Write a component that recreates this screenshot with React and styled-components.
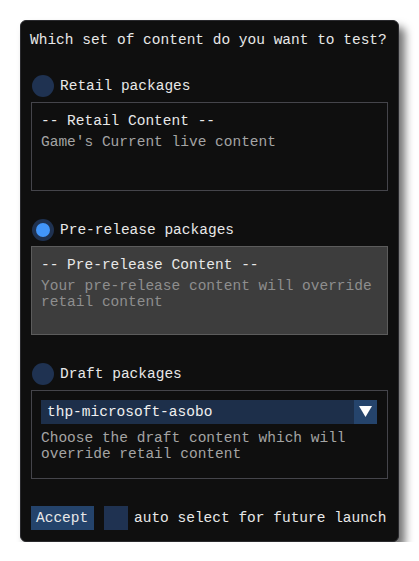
import React, { useState } from "react";
import styled, { createGlobalStyle } from "styled-components";

const GlobalStyle = createGlobalStyle`
  body {
    margin: 0;
    background: #ffffff;
    font-family: "Liberation Mono", "DejaVu Sans Mono", monospace;
  }
`;

const Page = styled.div`
  padding: 20px 0 0 20px;
`;

const Window = styled.div`
  width: 379px;
  box-sizing: border-box;
  padding: 10px 10px 11px 10px;
  background: #0f0f0f;
  border: 1px solid #2a2a2e;
  border-radius: 6px;
  box-shadow: 6px 7px 9px rgba(0, 0, 0, 0.55);
  color: #e8e8e8;
  font-size: 14.5px;
  display: flex;
  flex-direction: column;
`;

const Title = styled.div`
  line-height: 18px;
  white-space: pre;
  margin-left: -1px;
`;

const Section = styled.div`
  display: flex;
  flex-direction: column;
  gap: 5px;
  margin-top: ${({ $top }) => $top}px;
`;

const RadioRow = styled.label`
  display: flex;
  align-items: center;
  gap: 6px;
  height: 22px;
  margin-left: 1px;
  cursor: pointer;
  white-space: pre;
`;

const RadioCircle = styled.span`
  width: 22px;
  height: 22px;
  border-radius: 50%;
  background: #1f3251;
  display: flex;
  align-items: center;
  justify-content: center;
  &::after {
    content: "";
    display: ${({ $on }) => ($on ? "block" : "none")};
    width: 14px;
    height: 14px;
    border-radius: 50%;
    background: #4296fa;
  }
`;

const Panel = styled.div`
  height: 89px;
  box-sizing: border-box;
  padding: 10px 9px 0 9px;
  border: 1px solid ${({ $active }) => ($active ? "#5c5c5c" : "#45454b")};
  background: ${({ $active }) => ($active ? "#3d3d3d" : "transparent")};
  display: flex;
  flex-direction: column;
`;

const PanelTitle = styled.div`
  line-height: 16px;
  white-space: pre;
  margin-bottom: 5px;
`;

const Dim = styled.div`
  line-height: 16px;
  color: ${({ $active }) => ($active ? "#8e8e8e" : "#a4a4a4")};
  white-space: pre-wrap;
`;

const Combo = styled.div`
  display: flex;
  height: 24px;
  background: #1d2f4a;
  margin: -1px 1px 6px 0;
`;

const ComboText = styled.div`
  flex: 1;
  line-height: 24px;
  padding-left: 6px;
  color: #f0f0f0;
`;

const ComboArrow = styled.div`
  width: 23px;
  background: #25446c;
  display: flex;
  align-items: center;
  justify-content: center;
`;

const Footer = styled.div`
  display: flex;
  align-items: center;
  margin-top: 27px;
`;

const Button = styled.button`
  height: 24px;
  width: 63px;
  padding: 0 0 0 5px;
  text-align: left;
  border: none;
  background: #24436b;
  color: #e8e8e8;
  font: inherit;
`;

const Checkbox = styled.span`
  width: 24px;
  height: 24px;
  background: #1f3251;
  margin-left: 10px;
  margin-right: 6px;
`;

const FooterLabel = styled.span`
  white-space: pre;
`;

const options = [
  {
    key: "retail",
    label: "Retail packages",
    title: "-- Retail Content --",
    desc: "Game's Current live content",
  },
  {
    key: "pre",
    label: "Pre-release packages",
    title: "-- Pre-release Content --",
    desc: "Your pre-release content will override\nretail content",
  },
];

export default function App() {
  const [selected, setSelected] = useState("pre");

  return (
    <Page>
      <GlobalStyle />
      <Window>
        <Title>Which set of content do you want to test?</Title>
        {options.map((opt, i) => (
          <Section key={opt.key} $top={i === 0 ? 26 : 28}>
            <RadioRow onClick={() => setSelected(opt.key)}>
              <RadioCircle $on={selected === opt.key} />
              {opt.label}
            </RadioRow>
            <Panel $active={selected === opt.key}>
              <PanelTitle>{opt.title}</PanelTitle>
              <Dim $active={selected === opt.key}>{opt.desc}</Dim>
            </Panel>
          </Section>
        ))}
        <Section $top={28}>
          <RadioRow onClick={() => setSelected("draft")}>
            <RadioCircle $on={selected === "draft"} />
            Draft packages
          </RadioRow>
          <Panel $active={selected === "draft"}>
            <Combo>
              <ComboText>thp-microsoft-asobo</ComboText>
              <ComboArrow>
                <svg width="13" height="12" viewBox="0 0 13 12">
                  <path d="M0 0 H13 L6.5 11 Z" fill="#ffffff" />
                </svg>
              </ComboArrow>
            </Combo>
            <Dim $active={selected === "draft"}>
              {"Choose the draft content which will\noverride retail content"}
            </Dim>
          </Panel>
        </Section>
        <Footer>
          <Button>Accept</Button>
          <Checkbox />
          <FooterLabel>auto select for future launch</FooterLabel>
        </Footer>
      </Window>
    </Page>
  );
}
